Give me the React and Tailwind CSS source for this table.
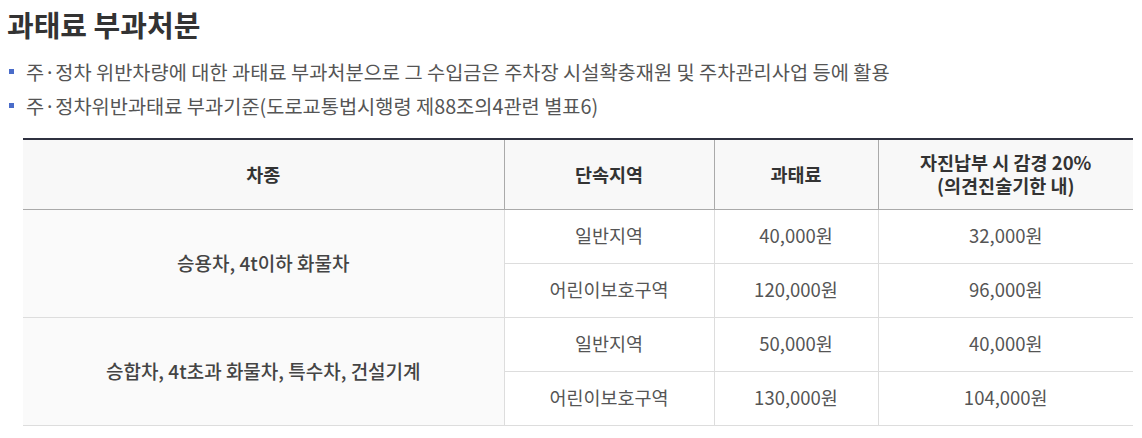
export default function App() {
  const font = { fontFamily: '"Noto Sans CJK KR", "Noto Sans", sans-serif' };
  const rows = [
    { kind: "승용차, 4t이하 화물차", items: [["일반지역", "40,000원", "32,000원"], ["어린이보호구역", "120,000원", "96,000원"]] },
    { kind: "승합차, 4t초과 화물차, 특수차, 건설기계", items: [["일반지역", "50,000원", "40,000원"], ["어린이보호구역", "130,000원", "104,000원"]] },
  ];
  return (
    <div className="w-[1142px] h-[438px] bg-white overflow-hidden" style={font}>
      <h1 className="pl-[7px] pt-[5px] text-[29px] leading-[38px] font-bold text-[#333]">과태료 부과처분</h1>
      <ul className="mt-[17px] pl-[9px] flex flex-col gap-[10px] text-[19.75px] leading-[24px] text-[#555]">
        <li className="flex items-center gap-[12px]">
          <span className="w-[5px] h-[5px] bg-[#4a6cc9] shrink-0 -mt-[2px]"></span>
          <span>주·정차 위반차량에 대한 과태료 부과처분으로 그 수입금은 주차장 시설확충재원 및 주차관리사업 등에 활용</span>
        </li>
        <li className="flex items-center gap-[12px]">
          <span className="w-[5px] h-[5px] bg-[#4a6cc9] shrink-0 -mt-[2px]"></span>
          <span>주·정차위반과태료 부과기준(도로교통법시행령 제88조의4관련 별표6)</span>
        </li>
      </ul>
      <div className="pl-[23px] mt-[20px]">
        <table className="w-[1110px] border-collapse table-fixed border-t-2 border-t-[#2f3140]">
          <colgroup>
            <col className="w-[481px]" />
            <col className="w-[210px]" />
            <col className="w-[164px]" />
            <col className="w-[255px]" />
          </colgroup>
          <thead>
            <tr className="h-[70px] bg-[#f8f8f8] text-[18.5px] leading-[23px] font-bold text-[#333]">
              <th className="border-b border-b-[#aaa] font-bold">차종</th>
              <th className="border-b border-l border-[#aaa] font-bold">단속지역</th>
              <th className="border-b border-l border-[#aaa] font-bold">과태료</th>
              <th className="border-b border-l border-[#aaa] font-bold">
                <div>자진납부 시 감경 20%</div>
                <div>(의견진술기한 내)</div>
              </th>
            </tr>
          </thead>
          <tbody className="text-[18.5px] text-[#555]">
            {rows.map((r, i) => (
              <>
                <tr key={i + "a"} className="h-[54px]">
                  <td rowSpan={2} className="bg-[#fafafa] border-b border-[#ddd] text-center font-medium text-[#444] text-[19px]">{r.kind}</td>
                  {r.items[0].map((t, j) => (
                    <td key={j} className="border-b border-l border-[#ddd] text-center">{t}</td>
                  ))}
                </tr>
                <tr key={i + "b"} className="h-[54px]">
                  {r.items[1].map((t, j) => (
                    <td key={j} className="border-b border-l border-[#ddd] text-center">{t}</td>
                  ))}
                </tr>
              </>
            ))}
          </tbody>
        </table>
      </div>
    </div>
  );
}
